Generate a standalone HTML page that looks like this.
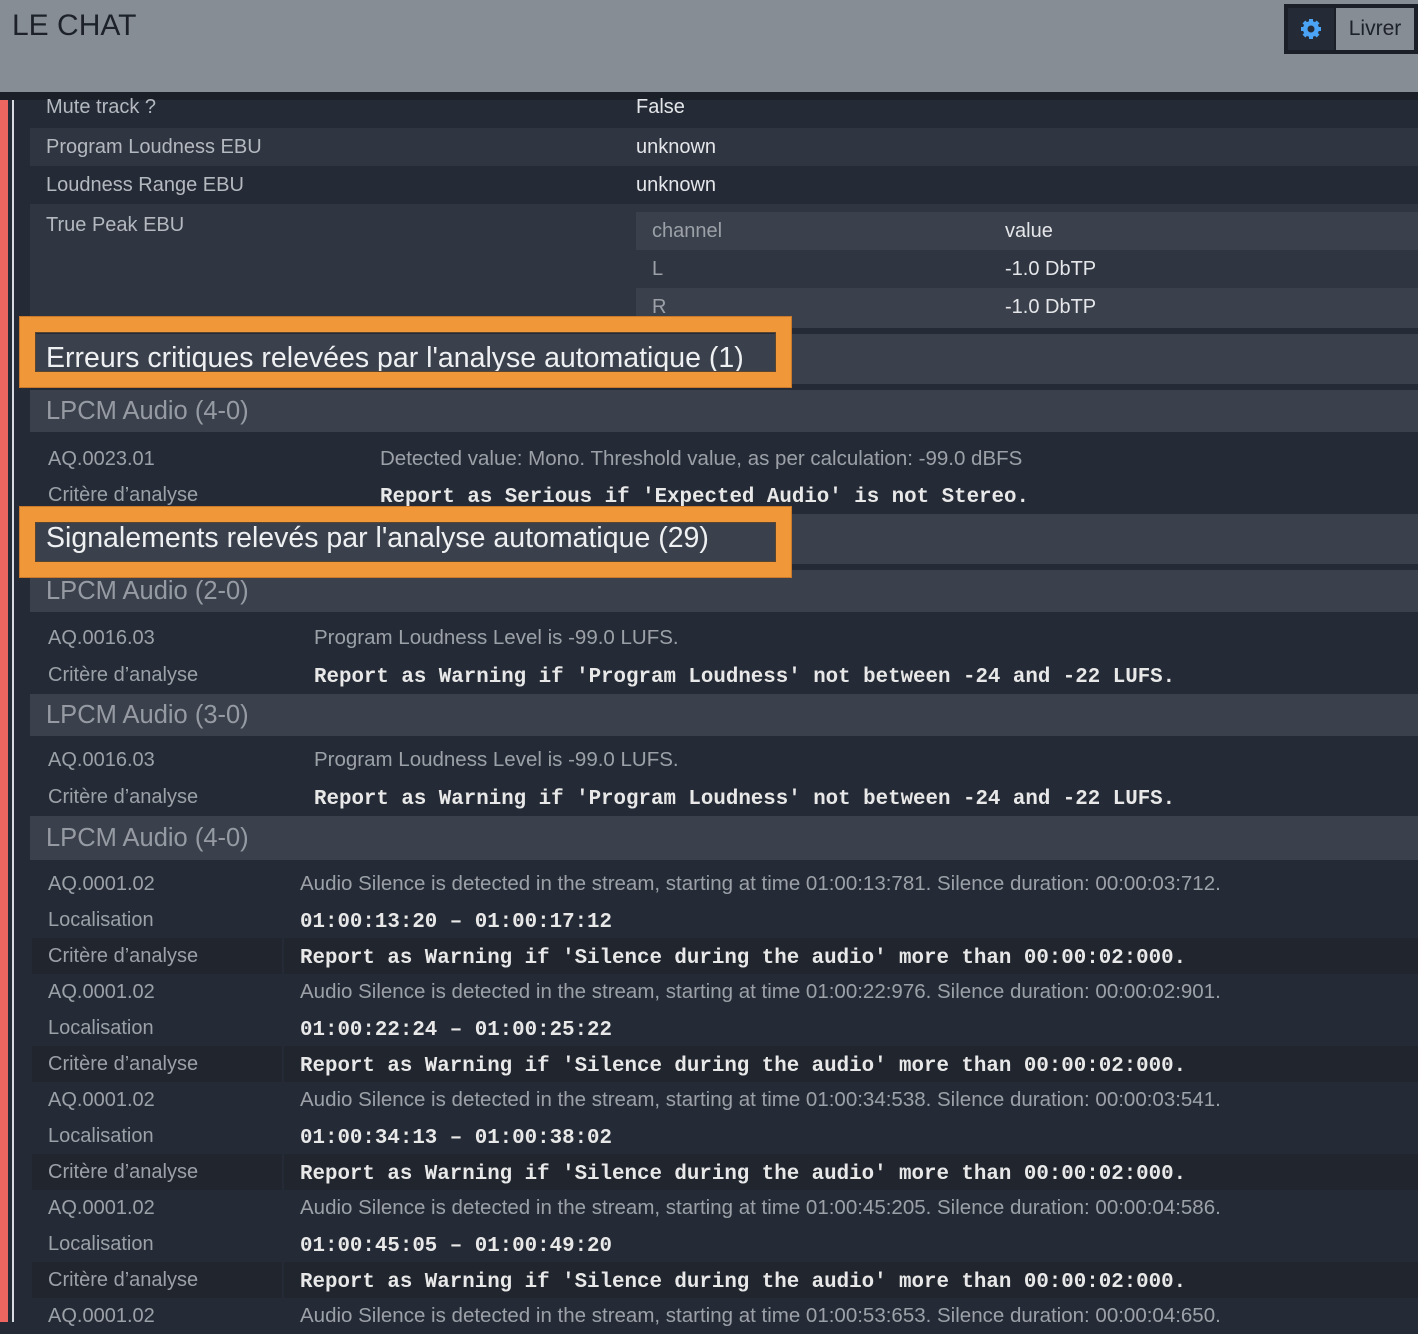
<!DOCTYPE html>
<html><head><meta charset="utf-8"><style>
*{margin:0;padding:0;box-sizing:border-box}
body{width:1418px;height:1322px;overflow:hidden;background:#252b36;font-family:"Liberation Sans",sans-serif;position:relative}
.a{position:absolute;white-space:nowrap}
.hdr{left:0;top:0;width:1418px;height:92px;background:#878d94}
.bar{left:0;top:92px;width:1418px;height:8px;background:#1b1f27}
.lbl{font-size:20px;color:#b4b8bf;line-height:38px}
.val{font-size:20px;color:#e4e6e9;line-height:38px}
.dsc{font-size:20px;color:#9ca1a8;line-height:36px}
.dsc.w{font-size:20.5px}
.mono{font-family:"Liberation Mono",monospace;font-weight:bold;font-size:20.8px;color:#e8e8e8;line-height:36px;margin-top:3px}
.sec{left:30px;width:1388px;background:#3b414c;font-size:28.5px;color:#eef0f2;padding-left:16px}
.grp{left:30px;width:1388px;background:#3b414c;font-size:25.5px;color:#969ba3;padding-left:16px}
.row{left:30px;width:1388px}
.box{border:15px solid #f0973a;outline:1px solid #c87a2a}
.box::after{content:"";position:absolute;inset:0;border:1px solid #5a4530}
</style></head><body>
<div class="a hdr"></div>
<div class="a" style="left:12px;top:9px;font-size:30px;color:#1d222a">LE CHAT</div>
<div class="a" style="left:1284px;top:4px;width:134px;height:50px;background:#1b1f27"></div>
<div class="a" style="left:1288px;top:8px;width:46px;height:42px;background:#252b36"></div>
<svg class="a" style="left:1300px;top:18px" width="22" height="22" viewBox="0 0 22 22"><g fill="#4aa3f5"><circle cx="11" cy="11" r="8"/><g><rect x="9" y="1" width="4" height="20"/><rect x="1" y="9" width="20" height="4"/><rect x="9" y="1" width="4" height="20" transform="rotate(45 11 11)"/><rect x="9" y="1" width="4" height="20" transform="rotate(-45 11 11)"/></g></g><circle cx="11" cy="11" r="3.5" fill="#252b36"/></svg>
<div class="a" style="left:1336px;top:8px;width:78px;height:42px;background:#878d94;font-size:21px;color:#1d222a;line-height:42px;text-align:center">Livrer</div>
<div class="a bar"></div>
<div class="a" style="left:0;top:100px;width:8px;height:1222px;background:#ee6660"></div>
<div class="a" style="left:12px;top:100px;width:1.5px;height:1222px;background:#d8dbe0"></div>

<div class="a lbl" style="left:46px;top:88px">Mute track ?</div>
<div class="a val" style="left:636px;top:88px">False</div>
<div class="a row" style="top:128px;height:38px;background:#2f3541"></div>
<div class="a lbl" style="left:46px;top:128px">Program Loudness EBU</div>
<div class="a val" style="left:636px;top:128px">unknown</div>
<div class="a lbl" style="left:46px;top:166px">Loudness Range EBU</div>
<div class="a val" style="left:636px;top:166px">unknown</div>
<div class="a row" style="top:204px;height:124px;background:#2f3541"></div>
<div class="a lbl" style="left:46px;top:206px">True Peak EBU</div>
<div class="a" style="left:636px;top:212px;width:782px;height:38px;background:#3b414c"></div>
<div class="a" style="left:636px;top:288px;width:782px;height:40px;background:#3b414c"></div>
<div class="a lbl" style="left:652px;top:212px;color:#9ca1a8">channel</div>
<div class="a val" style="left:1005px;top:212px">value</div>
<div class="a lbl" style="left:652px;top:250px;color:#9ca1a8">L</div>
<div class="a val" style="left:1005px;top:250px">-1.0 DbTP</div>
<div class="a lbl" style="left:652px;top:288px;color:#9ca1a8">R</div>
<div class="a val" style="left:1005px;top:288px">-1.0 DbTP</div>

<div class="a sec" style="top:334px;height:50px;line-height:48px">Erreurs critiques relevées par l'analyse automatique (1)</div>
<div class="a grp" style="top:390px;height:42px;line-height:42px">LPCM Audio (4-0)</div>
<div class="a dsc" style="left:48px;top:441px">AQ.0023.01</div>
<div class="a dsc w" style="left:380px;top:441px">Detected value: Mono. Threshold value, as per calculation: -99.0 dBFS</div>
<div class="a dsc" style="left:48px;top:477px">Critère d’analyse</div>
<div class="a mono" style="left:380px;top:477px">Report as Serious if 'Expected Audio' is not Stereo.</div>

<div class="a sec" style="top:514px;height:50px;line-height:48px">Signalements relevés par l'analyse automatique (29)</div>
<div class="a grp" style="top:570px;height:42px;line-height:42px">LPCM Audio (2-0)</div>
<div class="a dsc" style="left:48px;top:620px">AQ.0016.03</div>
<div class="a dsc w" style="left:314px;top:620px">Program Loudness Level is -99.0 LUFS.</div>
<div class="a dsc" style="left:48px;top:657px">Critère d’analyse</div>
<div class="a mono" style="left:314px;top:657px">Report as Warning if 'Program Loudness' not between -24 and -22 LUFS.</div>
<div class="a grp" style="top:694px;height:42px;line-height:42px">LPCM Audio (3-0)</div>
<div class="a dsc" style="left:48px;top:742px">AQ.0016.03</div>
<div class="a dsc w" style="left:314px;top:742px">Program Loudness Level is -99.0 LUFS.</div>
<div class="a dsc" style="left:48px;top:779px">Critère d’analyse</div>
<div class="a mono" style="left:314px;top:779px">Report as Warning if 'Program Loudness' not between -24 and -22 LUFS.</div>
<div class="a grp" style="top:816px;height:44px;line-height:44px">LPCM Audio (4-0)</div>

<div class="a" style="left:32px;top:938px;width:250px;height:36px;background:#20252e"></div><div class="a" style="left:284px;top:938px;width:1134px;height:36px;background:#20252e"></div>
<div class="a" style="left:32px;top:1046px;width:250px;height:36px;background:#20252e"></div><div class="a" style="left:284px;top:1046px;width:1134px;height:36px;background:#20252e"></div>
<div class="a" style="left:32px;top:1154px;width:250px;height:36px;background:#20252e"></div><div class="a" style="left:284px;top:1154px;width:1134px;height:36px;background:#20252e"></div>
<div class="a" style="left:32px;top:1262px;width:250px;height:36px;background:#20252e"></div><div class="a" style="left:284px;top:1262px;width:1134px;height:36px;background:#20252e"></div>

<div class="a dsc" style="left:48px;top:866px">AQ.0001.02</div>
<div class="a dsc w" style="left:300px;top:866px">Audio Silence is detected in the stream, starting at time 01:00:13:781. Silence duration: 00:00:03:712.</div>
<div class="a dsc" style="left:48px;top:902px">Localisation</div>
<div class="a mono" style="left:300px;top:902px">01:00:13:20 – 01:00:17:12</div>
<div class="a dsc" style="left:48px;top:938px">Critère d’analyse</div>
<div class="a mono" style="left:300px;top:938px">Report as Warning if 'Silence during the audio' more than 00:00:02:000.</div>

<div class="a dsc" style="left:48px;top:974px">AQ.0001.02</div>
<div class="a dsc w" style="left:300px;top:974px">Audio Silence is detected in the stream, starting at time 01:00:22:976. Silence duration: 00:00:02:901.</div>
<div class="a dsc" style="left:48px;top:1010px">Localisation</div>
<div class="a mono" style="left:300px;top:1010px">01:00:22:24 – 01:00:25:22</div>
<div class="a dsc" style="left:48px;top:1046px">Critère d’analyse</div>
<div class="a mono" style="left:300px;top:1046px">Report as Warning if 'Silence during the audio' more than 00:00:02:000.</div>

<div class="a dsc" style="left:48px;top:1082px">AQ.0001.02</div>
<div class="a dsc w" style="left:300px;top:1082px">Audio Silence is detected in the stream, starting at time 01:00:34:538. Silence duration: 00:00:03:541.</div>
<div class="a dsc" style="left:48px;top:1118px">Localisation</div>
<div class="a mono" style="left:300px;top:1118px">01:00:34:13 – 01:00:38:02</div>
<div class="a dsc" style="left:48px;top:1154px">Critère d’analyse</div>
<div class="a mono" style="left:300px;top:1154px">Report as Warning if 'Silence during the audio' more than 00:00:02:000.</div>

<div class="a dsc" style="left:48px;top:1190px">AQ.0001.02</div>
<div class="a dsc w" style="left:300px;top:1190px">Audio Silence is detected in the stream, starting at time 01:00:45:205. Silence duration: 00:00:04:586.</div>
<div class="a dsc" style="left:48px;top:1226px">Localisation</div>
<div class="a mono" style="left:300px;top:1226px">01:00:45:05 – 01:00:49:20</div>
<div class="a dsc" style="left:48px;top:1262px">Critère d’analyse</div>
<div class="a mono" style="left:300px;top:1262px">Report as Warning if 'Silence during the audio' more than 00:00:02:000.</div>

<div class="a dsc" style="left:48px;top:1298px">AQ.0001.02</div>
<div class="a dsc w" style="left:300px;top:1298px">Audio Silence is detected in the stream, starting at time 01:00:53:653. Silence duration: 00:00:04:650.</div>

<div class="a box" style="left:20px;top:317px;width:771px;height:70px"></div>
<div class="a box" style="left:20px;top:507px;width:771px;height:70px"></div>
</body></html>
